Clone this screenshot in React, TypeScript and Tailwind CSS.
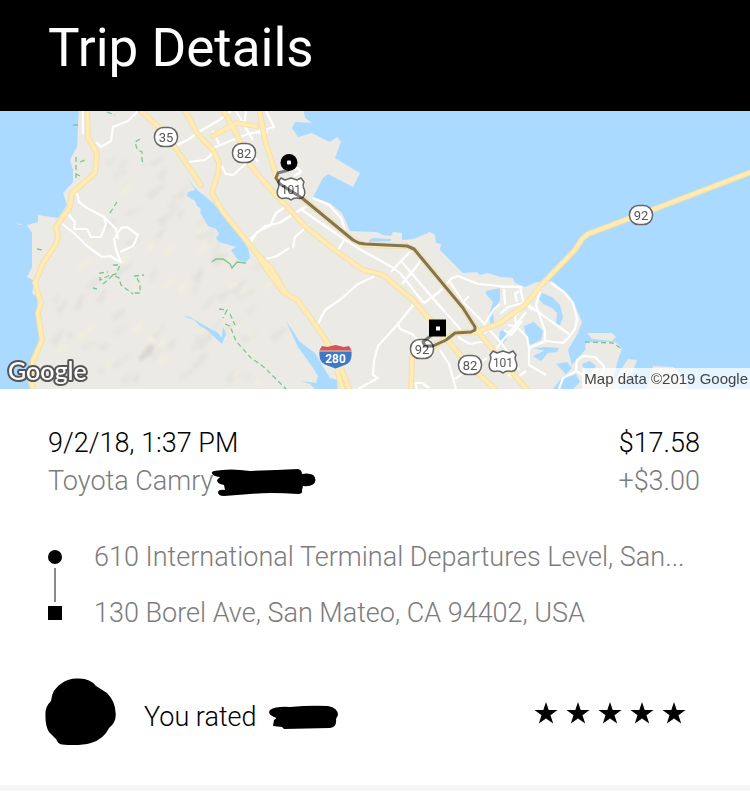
import React from 'react';

const WATER = '#aadaff';
const LAND = '#ebeae5';

const mainLand =
  'M79 105 L77 147 L70 160 L73 170 L73 182 L63 193 L67 205 L58 218 L38 215 L38 222 L27 225 L32 233 L32 267 L27 277 L35 281 L32 293 L37 297 L38 317 L39 340 L33 357 L30 373 L32 395 L610 395 L617 363 L622 348 L615 342 L586 342 L585 350 L572 365 L568 350 L578 333 L582 322 L577 310 L570 297 L552 281 L537 282 L525 287 L515 283 L513 278 L500 277 L488 273 L480 275 L477 272 L463 273 L450 260 L440 250 L441 244 L436 243 L435 235 L430 232 L413 239 L402 240 L402 233 L393 232 L391 236 L383 235 L377 232 L350 231 L342 213 L330 203 L313 197 L323 178 L328 174 L353 187 L360 173 L335 158 L341 142 L337 137 L330 142 L312 133 L298 137 L292 128 L295 122 L312 123 L305 118 L303 105 Z';

const islands = [
  'M587 333 L612 333 L616 337 L612 341 L592 339 Z',
  'M628 359 L637 360 L633 371 L626 380 L612 395 L608 395 L618 374 Z',
  'M653 366 L673 367 L685 378 L690 395 L645 395 Z',
  'M17 223 L22 225 L19 225 Z',
];

const lakes = [
  'M187 177 L195 188 L213 203 L233 227 L248 248 L250 258 L246 262 L238 260 L231 250 L236 247 L219 242 L216 238 L219 234 L216 229 L208 226 L200 212 L201 209 L197 206 L195 201 L187 196 L188 192 L195 190 Z',
  'M183 316 L190 317 L200 323 L218 333 L222 338 L223 327 L226 334 L222 344 L207 330 L200 326 L194 320 Z',
  'M286 321 L300 342 L315 353 L322 365 L330 378 L337 380 L338 392 L318 392 L310 384 L301 381 L316 383 L318 376 L311 365 L298 347 Z',
  'M542 293 L552 297 L560 305 L563 317 L560 325 L556 324 L557 313 L552 308 L543 304 L539 299 Z',
  'M486 291 L500 288 L500 300 L493 313 L494 322 L491 327 L489 315 L493 302 L486 294 Z',
  'M524 326 L534 322 L543 331 L541 340 L530 345 L526 337 Z',
  'M534 348 L546 347 L559 348 L557 352 L548 353 L541 361 L533 356 L544 351 Z',
  'M500 331 L507 330 L507 339 L501 346 L499 338 Z',
  'M582 364 L590 361 L596 366 L590 373 L584 369 Z',
  'M567 378 L576 374 L580 382 L573 389 L565 389 Z',
  'M556 364 L567 362 L572 368 L561 379 L552 390 L544 395 L561 395 L574 377 L568 376 Z',
  'M369 240 L374 238 L391 239 L391 241 L369 242 Z',
];

const localRoads = [
  'M83 111 L83 134',
  'M138 111 L128 121 L113 127 L111 141 L101 147 L96 142',
  'M176 146 L189 139 L197 133 L221 119 L231 111',
  'M188 162 L205 160 L211 155 L213 148 L250 133',
  'M221 165 L226 174 L233 175 L250 160',
  'M213 131 L219 144 M236 111 L249 133 M246 111 L244 126 L253 140',
  'M250 133 L268 132 M266 111 L274 127 L250 134',
  'M252 154 L258 162 M277 174 L298 168 L301 172 L294 176',
  'M77 193 L79 202 L87 208 L104 217 L106 224 L101 237 L91 237 L87 229 L74 229 L75 222 L68 214',
  'M60 222 L75 234 L87 246 L102 257 L110 256 L121 262 L116 250 L114 239 L121 228 L127 227 L138 235 L133 246 L120 252',
  'M104 217 L116 229 L118 239 M110 256 L116 260',
  'M313 198 L329 205 L341 218 L346 233',
  'M250 243 L257 232 L270 226 L276 213 L285 207',
  'M250 239 L265 226 L279 223 L310 204',
  'M302 210 L338 235 L361 250 L392 267 L401 274 L418 296 L424 303',
  'M338 250 L344 240 M293 248 L295 237 L309 225',
  'M266 259 L277 256 L289 248',
  'M318 324 L325 310 L341 299 L358 284 L373 277 L378 272',
  'M391 272 L400 262 L412 250 M401 261 L437 303 L461 330',
  'M402 284 L416 267 L423 257 M424 303 L439 292 L452 278 L458 276 L478 284 L500 286 L522 287',
  'M414 304 L398 324 L378 346 L374 361 L373 375 L378 378 L358 389',
  'M398 324 L400 329 L412 334 L421 343',
  'M450 282 L464 303 L480 319 L503 345 L519 370',
  'M440 350 L449 364 L456 389 M455 379 L472 367 L487 358 M486 341 L470 344 L459 338 L461 330',
  'M417 389 L415 383 L422 383 L429 388 M462 303 L469 296',
  'M551 283 L564 292 L573 303 L577 319 L575 329 L569 337 L563 343 L546 341 L529 348 L527 337 L516 326 L515 316 L527 304 L569 334',
  'M540 291 L536 305 L545 331 L545 342',
  'M500 287 L520 287 L523 300 L532 310 M517 302 L515 294 L519 291 M500 314 L508 307 L523 303',
  'M505 305 L504 289 M508 325 L515 326 L526 312 M515 326 L503 340 L495 351 L490 345',
  'M529 348 L529 365 L546 375 M504 330 L511 335 L522 321',
  'M500 321 L491 327 L482 335 M484 325 L494 309 L500 304',
  'M559 389 L563 378 L576 371 L577 360 L583 356 L595 357 L604 366 L602 376',
  'M576 371 L586 377 M508 375 L519 376 L526 371',
];

const highways = [
  'M87 106 L88 138 L97 153 L95 173 L72 193 L70 207 L56 227 L58 237 L55 246 L52 250 L43 263 L35 283 L41 303 L38 313 L42 340 L33 361 L30 378 L34 392',
  'M138 108 L167 135 L177 150 L201 185',
  'M184 108 L197 133 L213 150 L219 163 L218 173 L212 193 L223 212 L250 245 L258 255 L267 270 L283 292 L297 300 L310 317 L327 342 L337 367 L339 378 L344 394',
  'M258 255 L271 268 L285 292',
  'M327 342 L338 360 L351 394',
  'M222 108 L237 135 L250 165 L273 192 L307 228 L335 250 L363 270 L383 275 L413 300 L432 322 L450 343 L467 363 L498 392',
  'M213 136 L236 123 L256 126',
  'M259 108 L265 140 L275 172 L278 182 L302 198 L353 240 L365 245 L407 246 L415 250 L463 308 L475 327 L483 338 L503 362 L530 393',
  'M754 171 L652 210 L588 234 L582 239 L575 250 L543 283 L525 305 L500 323 L477 332 L455 333 L433 347 L415 350 L412 357 L411 392',
];

const trails = [
  'M73 125 L79 125 M107 112 L115 115 M76 157 L76 178 M80 162 L85 160 M76 174 L80 176',
  'M140 139 L135 142 L137 149 L142 152 L142 160 L144 165 M117 202 L110 213',
  'M113 265 L120 265 L116 274 L108 276 L100 280 L100 273 L108 272 M103 284 L113 275 L119 278 L121 285 L133 294 M134 276 L144 275 M137 278 L140 284 L140 293 L132 293 M93 288 L97 289',
  'M219 309 L227 310 L223 318 M230 314 L235 325 M225 324 L230 326 L236 341 L250 357 L265 368 L280 383 L286 389',
  'M585 342 L613 343 L622 349',
  'M37 249 L42 250',
];

// soft relief strokes over the hills in the west
const relief = Array.from({ length: 150 }, (_, i) => {
  const x = 50 + ((i * 67 + i * i * 3) % 235);
  const y = 150 + ((i * 41 + i * i) % 235);
  return { x, y, len: 5 + ((i * 5) % 13), up: 3 + ((i * 7) % 10), tone: i % 3 };
}).filter((r) => r.y > 150 + Math.max(0, r.x - 150) * 1.1 && (r.x > 95 || r.y > 265));

const tones = ['#dfded8', '#f3eedb', '#e3e2dc'];

const routeLine =
  'M289 170 L278 173 L276 178 L280 184 L302 198 L353 240 L359 243 L365 244 L407 246 L414 249 L463 308 L475 327 L475 330 L471 332 L455 333 L446 340 L433 346 L425 346 L423 342 L438 330';

const StateShield = ({ x, y, label }: { x: number; y: number; label: string }) => (
  <g>
    <rect x={x - 11.5} y={y - 9.5} width="23" height="19" rx="9" fill="#fff" stroke="#666" strokeWidth="1.5" />
    <text x={x} y={y + 4.5} textAnchor="middle" fontSize="13" fill="#555">{label}</text>
  </g>
);

const UsShield = ({ x, y, label }: { x: number; y: number; label: string }) => (
  <g>
    <path
      transform={`translate(${x} ${y})`}
      d="M-10 -11 L-6 -9 L0 -11 L6 -9 L10 -11 L13 -7 Q11 -4 13.500 1 Q15 8 9 9.500 Q3 8 0 11 Q-3 8 -9 9.500 Q-15 8 -13.500 1 Q-11 -4 -13 -7 Z"
      fill="#fff"
      stroke="#666"
      strokeWidth="1.5"
      strokeLinejoin="round"
    />
    <text x={x} y={y + 4.5} textAnchor="middle" fontSize="12" fill="#555">{label}</text>
  </g>
);

const TripMap = () => (
  <div className="relative">
    <svg viewBox="0 111 750 278" className="block w-full" role="img" aria-label="Trip route" fontFamily="Roboto, sans-serif">
      <rect y="111" width="750" height="278" fill={WATER} />
      <g fill={LAND}>
        <path d={mainLand} />
        {islands.map((d) => <path key={d} d={d} />)}
      </g>
      <g style={{ filter: 'blur(1.5px)' }}>
        {relief.map((r, i) => (
          <path
            key={i}
            d={`M${r.x} ${r.y} l${r.len} ${-r.up} l3 2 l${-r.len + 2} ${r.up + 3} Z`}
            fill={tones[r.tone]}
            opacity="0.6"
          />
        ))}
        <path d="M138 359 L149 344 L155 345 L152 354 L141 361 Z" fill="#d8d7d2" />
      </g>
      <g fill={WATER}>{lakes.map((d) => <path key={d} d={d} />)}</g>
      <g fill="none" stroke="#fff" strokeWidth="2.2" strokeLinejoin="round">
        {localRoads.map((d) => <path key={d} d={d} />)}
      </g>
      <g fill="none" stroke="#7cc68d" strokeWidth="1.3" strokeDasharray="5 3">
        {trails.map((d) => <path key={d} d={d} />)}
        <path d="M212 262 L216 259 L223 259 L230 264 L232 268 L237 262 L246 263" strokeDasharray="none" />
      </g>
      <g fill="none" stroke="#f6dfa6" strokeWidth="5.8" strokeLinejoin="round" strokeLinecap="round">
        {highways.map((d) => <path key={d} d={d} />)}
      </g>
      <g fill="none" stroke="#ffebb5" strokeWidth="3.8" strokeLinejoin="round" strokeLinecap="round">
        {highways.map((d) => <path key={d} d={d} />)}
      </g>

      <StateShield x={166} y={137} label="35" />
      <StateShield x={244} y={153} label="82" />
      <StateShield x={641} y={215} label="92" />
      <StateShield x={422} y={349} label="92" />
      <StateShield x={470} y={365} label="82" />
      <UsShield x={291} y={189} label="101" />
      <UsShield x={503} y={362} label="101" />
      <g>
        <path d="M322 346 L327 347 L335.500 345 L344 347 L349 346 L352 351 L319 351 Z" fill="#cf5652" />
        <path d="M319 351 L352 351 Q353 362 346 365 L335.500 369 L325 365 Q318 362 319 351 Z" fill="#3f79c6" stroke="#fff" strokeWidth="0.7" />
        <text x="335.5" y="363" textAnchor="middle" fontSize="12" fontWeight="700" fill="#fff">280</text>
      </g>

      <path d={routeLine} fill="none" stroke="#000" strokeOpacity="0.5" strokeWidth="3" strokeLinejoin="round" />
      <circle cx="289" cy="162.500" r="8.500" />
      <rect x="287" y="160.500" width="4" height="4" rx="1" fill="#fff" />
      <rect x="429" y="319.500" width="17" height="17" />
      <rect x="436" y="326.500" width="4" height="4" fill="#fff" />

      <text
        x="8"
        y="380"
        fontSize="25"
        fontWeight="500"
        fontFamily="Lato, sans-serif"
        fill="#fff"
        stroke="#555"
        strokeWidth="4"
        strokeLinejoin="round"
        paintOrder="stroke"
      >
        Google
      </text>
    </svg>
    <p className="absolute right-0 bottom-0 bg-white/70 px-0.5 font-['Liberation_Sans',sans-serif] text-[15px] leading-[21px] text-[#444]">
      Map data ©2019 Google
    </p>
  </div>
);

const Star = () => (
  <svg width="24" height="22" viewBox="0 0 24 22" aria-hidden="true">
    <path d="M12 0 L14.700 8 L23.500 8 L16.500 13.200 L19.200 21.500 L12 16.500 L4.800 21.500 L7.500 13.200 L0.500 8 L9.300 8 Z" />
  </svg>
);

export default function App() {
  return (
    <div className="bg-[#f6f6f6] font-[Roboto,sans-serif] text-black">
      <header className="bg-black px-12 pt-4 pb-[31px]">
        <h1 className="text-[53px] leading-[64px] font-normal text-white">Trip Details</h1>
      </header>

      <TripMap />

      <main className="bg-white pt-[35px] pb-9 text-[27px] leading-[38px] font-light">
        <section className="pr-[50px] pl-12">
          <div className="flex justify-between">
            <time>9/2/18, 1:37 PM</time>
            <span>$17.58</span>
          </div>
          <div className="flex justify-between text-[#7c7c7c]">
            <div className="flex items-center">
              <span>Toyota Camry</span>
              <svg width="104" height="28" viewBox="213 467 104 28" aria-hidden="true" className="overflow-visible">
                <path
                  fill="#000"
                  d="M214 471 Q230 468 250 471 Q275 470 298 469 Q302 470 302 474 Q315 472 315.500 480 Q315 487 303 486 L302 490 Q303 494 298 494 Q270 492 250 494 L224 496 Q218 496 218 492 Q219 489 225 490 L224 485 Q217 484 217 480 L220 477 Q211 476 212 472 Z"
                />
              </svg>
            </div>
            <span>+$3.00</span>
          </div>
        </section>

        <section className="mt-[29px] flex gap-8 pr-[50px] pl-12 text-[#7c7c7c]">
          <div className="flex shrink-0 flex-col items-center gap-1 py-[21px]">
            <span className="size-3.5 rounded-full bg-black" />
            <span className="w-0.5 flex-1 bg-[#8a8a8a]" />
            <span className="size-3.5 bg-black" />
          </div>
          <ul className="min-w-0 leading-[56px]">
            <li>610 International Terminal Departures Level, San...</li>
            <li>130 Borel Ave, San Mateo, CA 94402, USA</li>
          </ul>
        </section>

        <section className="mt-9 flex items-center gap-7 pr-16 pl-11">
          <svg width="72" height="72" viewBox="44 677 72 72" aria-hidden="true">
            <path d="M78 678.500 Q90 678 96 686 L107 693 Q115 701 115.500 712 Q117 722 109 728 Q104 739 91 743 Q80 746 62 744.500 Q58 744 56 739 L49 732 Q45 726 45.500 714 Q45 707 51 701 Q52 689 62 683 Q69 678 78 678.500 Z" />
          </svg>
          <div className="flex flex-1 items-center gap-3 pt-2">
            <span>You rated</span>
            <svg width="70" height="24" viewBox="269 704 70 24" aria-hidden="true">
              <path d="M270 709 Q276 705 290 706 Q310 704 328 705 Q338 707 338 714 L336 718 Q337 726 330 727 L284 728 L282 726 L273 725 L274 719 Q278 717 274 716 Q267 713 270 709 Z" />
            </svg>
          </div>
          <div className="flex gap-2" role="img" aria-label="5 out of 5 stars">
            <Star />
            <Star />
            <Star />
            <Star />
            <Star />
          </div>
        </section>
      </main>
      <div className="h-1.5" />
    </div>
  );
}
